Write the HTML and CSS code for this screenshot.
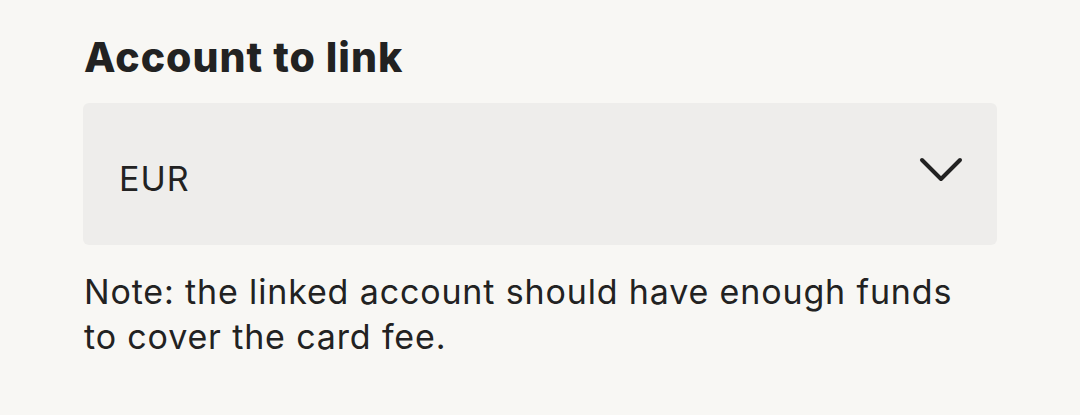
FILE: index.html
```html
<!DOCTYPE html>
<html lang="en">
<head>
<meta charset="utf-8">
<link rel="stylesheet" href="styles.css">
</head>
<body>
<div class="field">
  <h2 class="label">Account to link</h2>
  <div class="select">
    <span class="value">EUR</span>
    <svg class="chevron" width="44" height="26" viewBox="0 0 44 26" aria-hidden="true">
      <path d="M3 3 L22 22 L41 3" fill="none" stroke="#222222" stroke-width="4" stroke-linecap="round" stroke-linejoin="round"/>
    </svg>
  </div>
  <p class="note">Note: the linked account should have enough funds<br>to cover the card fee.</p>
</div>
</body>
</html>
```
FILE: styles.css
```css
html, body {
  margin: 0;
  padding: 0;
  background: #f8f7f4;
}
body {
  font-family: Inter, "Noto Sans", sans-serif;
  color: #222222;
}
.field {
  padding: 29px 0 0 83px;
  width: 914px;
}
.label {
  margin: 0 0 18px 1px;
  font-size: 41px;
  font-weight: 800;
  line-height: 56px;
  letter-spacing: 1px;
}
.select {
  height: 142px;
  background: #eeedeb;
  border-radius: 6px;
  display: flex;
  align-items: center;
  justify-content: space-between;
  padding: 0 34px 0 36px;
  box-sizing: border-box;
}
.value {
  font-size: 34px;
  line-height: 44px;
  padding-top: 10px;
  letter-spacing: 1px;
}
.chevron {
  margin-top: -9px;
}
.note {
  margin: 24px 0 0 1px;
  font-size: 34px;
  line-height: 45px;
  letter-spacing: 0.85px;
}
```
